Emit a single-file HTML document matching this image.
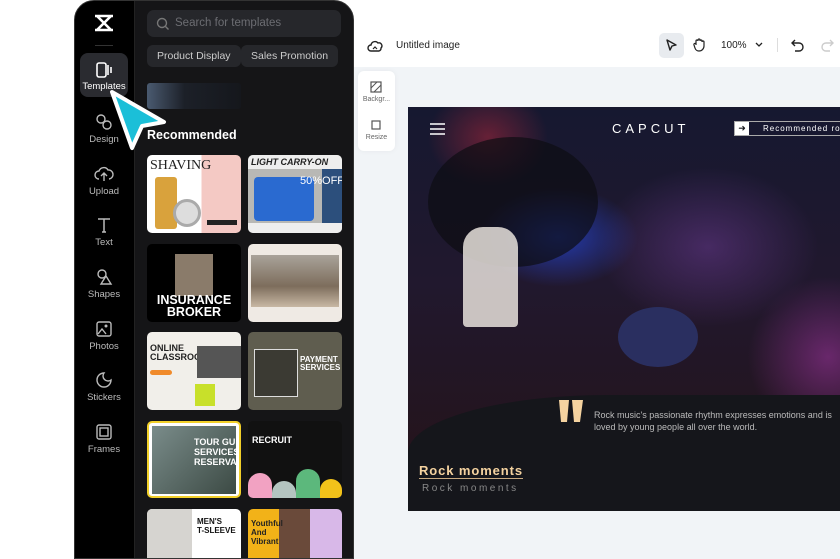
<!DOCTYPE html>
<html><head><meta charset="utf-8"><style>
*{margin:0;padding:0;box-sizing:border-box}
body{width:840px;height:559px;overflow:hidden;background:#fff;font-family:"Liberation Sans",sans-serif;position:relative}
.panel{position:absolute;left:74px;top:0;width:280px;height:559px;background:#151517;border-radius:20px 20px 0 0;overflow:hidden;border:1px solid #333}
.nav{position:absolute;left:0;top:0;width:59px;height:100%;background:#000}
.ni{position:absolute;left:5px;width:48px;text-align:center;color:#bbb;font-size:9.5px}
.ni svg{display:block;margin:0 auto 3px}
.search{position:absolute;left:72px;top:9px;width:194px;height:27px;background:#26272b;border-radius:7px;color:#6c6d72;font-size:11.5px;line-height:27px;padding-left:28px}
.chip{position:absolute;top:44px;height:22px;background:#26272b;border-radius:6px;color:#ccc;font-size:10.5px;line-height:22px;padding:0 10px}
.card{position:absolute;width:94px;border-radius:5px;overflow:hidden}
.a{position:absolute}
</style></head><body>
<div class="panel">
 <div class="nav">
  <svg class="a" style="left:17px;top:12px" width="24" height="20" viewBox="0 0 24 20"><path d="M3 3h18M3 17h18M5 3l14 14M19 3L5 17" stroke="#fff" stroke-width="2.6" fill="none"/></svg>
  <div class="a" style="left:20px;top:44px;width:18px;height:1px;background:#333"></div>
  <div class="ni" style="top:52px;height:44px;background:#2a2b30;border-radius:8px;padding-top:9px;color:#fff"><svg width="18" height="16"><rect x="2" y="1" width="9" height="14" rx="2" stroke="#fff" stroke-width="1.6" fill="none"/><path d="M13 3v10M16 5v6" stroke="#fff" stroke-width="1.6"/></svg>Templates</div>
  <div class="ni" style="top:112px"><svg width="18" height="18"><circle cx="6" cy="6" r="4" stroke="#bbb" stroke-width="1.4" fill="none"/><circle cx="12" cy="12" r="4" stroke="#bbb" stroke-width="1.4" fill="none"/></svg>Design</div>
  <div class="ni" style="top:164px"><svg width="20" height="18"><path d="M5 14a4 4 0 010-8 5 5 0 019-1 4 4 0 011 9M10 9v7M7 11l3-3 3 3" stroke="#bbb" stroke-width="1.4" fill="none"/></svg>Upload</div>
  <div class="ni" style="top:215px"><svg width="18" height="18"><path d="M3 3h12M9 3v13M7 16h4" stroke="#bbb" stroke-width="1.5" fill="none"/></svg>Text</div>
  <div class="ni" style="top:267px"><svg width="18" height="18"><circle cx="7" cy="6" r="4" stroke="#bbb" stroke-width="1.4" fill="none"/><path d="M11 8l5 8H6z" stroke="#bbb" stroke-width="1.4" fill="none"/></svg>Shapes</div>
  <div class="ni" style="top:319px"><svg width="18" height="18"><rect x="2" y="2" width="14" height="14" rx="2" stroke="#bbb" stroke-width="1.4" fill="none"/><circle cx="11" cy="6" r="1.5" fill="#bbb"/><path d="M3 14l4-5 4 5" stroke="#bbb" stroke-width="1.4" fill="none"/></svg>Photos</div>
  <div class="ni" style="top:370px"><svg width="18" height="18"><path d="M9 2a7 7 0 107 7 5 5 0 01-7-7z" stroke="#bbb" stroke-width="1.4" fill="none"/></svg>Stickers</div>
  <div class="ni" style="top:422px"><svg width="18" height="18"><rect x="2" y="2" width="14" height="14" rx="2" stroke="#bbb" stroke-width="1.4" fill="none"/><rect x="5" y="5" width="8" height="8" stroke="#bbb" stroke-width="1.4" fill="none"/></svg>Frames</div>
 </div>
 <div class="a" style="left:59px;top:0;width:1px;height:100%;background:#222"></div>
 <div class="search"><svg class="a" style="left:9px;top:7px" width="13" height="13"><circle cx="6" cy="6" r="4.5" stroke="#777" stroke-width="1.4" fill="none"/><path d="M9.5 9.5l3 3" stroke="#777" stroke-width="1.4"/></svg>Search for templates</div>
 <div class="chip" style="left:72px">Product Display</div>
 <div class="chip" style="left:166px">Sales Promotion</div>
 <div class="a" style="left:72px;top:82px;width:94px;height:26px;background:linear-gradient(90deg,#4a5a70,#1c2028 40%,#15171c);border-radius:3px"></div>
 <div class="a" style="left:72px;top:127px;color:#fff;font-weight:bold;font-size:12.5px">Recommended</div>
 <div class="card" style="left:72px;top:154px;height:78px;background:linear-gradient(90deg,#fff 58%,#f4c9c4 58%)"><div class="a" style="left:3px;top:3px;font:14px 'Liberation Serif',serif;color:#222">SHAVING</div><div class="a" style="left:8px;top:22px;width:22px;height:52px;background:#d9a23c;border-radius:3px"></div><div class="a" style="left:26px;top:44px;width:28px;height:28px;border-radius:50%;background:#ddd;border:3px solid #aaa"></div><div class="a" style="left:60px;top:65px;width:30px;height:5px;background:#222"></div></div>
 <div class="card" style="left:173px;top:154px;height:78px;background:#b8b8b5"><div class="a" style="left:0;top:0;width:94px;height:14px;background:#eee;font:bold italic 9px 'Liberation Sans';color:#222;padding:2px 3px">LIGHT CARRY-ON</div><div class="a" style="left:6px;top:22px;width:60px;height:44px;background:#2a6ad0;border-radius:4px"></div><div class="a" style="left:74px;top:14px;width:20px;height:54px;background:#2c4f7c"></div><div class="a" style="left:52px;top:20px;color:#fff;font-size:11px">50%OFF</div><div class="a" style="left:0;top:68px;width:94px;height:10px;background:#eee"></div></div>
 <div class="card" style="left:72px;top:243px;height:78px;background:#000"><div class="a" style="left:28px;top:10px;width:38px;height:42px;background:#8a7b6a"></div><div class="a" style="left:0;top:50px;width:94px;text-align:center;color:#fff;font-weight:bold;font-size:12.5px;line-height:12px">INSURANCE<br>BROKER</div></div>
 <div class="card" style="left:173px;top:243px;height:78px;background:#efeae4"><div class="a" style="left:3px;top:11px;width:88px;height:52px;background:linear-gradient(#a9a39a,#7d6d5c 60%,#c8b8a4)"></div></div>
 <div class="card" style="left:72px;top:331px;height:78px;background:#f1efea"><div class="a" style="left:3px;top:12px;font:bold 9px 'Liberation Sans';color:#222;line-height:9px">ONLINE<br>CLASSROOM</div><div class="a" style="left:50px;top:14px;width:44px;height:32px;background:#555"></div><div class="a" style="left:48px;top:52px;width:20px;height:22px;background:#c8e02a"></div><div class="a" style="left:3px;top:38px;width:22px;height:5px;background:#f08a2a;border-radius:3px"></div></div>
 <div class="card" style="left:173px;top:331px;height:78px;background:#5f5d4f"><div class="a" style="left:6px;top:17px;width:44px;height:48px;background:#3b3a33;border:1px solid #ddd"></div><div class="a" style="left:52px;top:24px;color:#fff;font:bold 8px 'Liberation Sans';line-height:8px">PAYMENT<br>SERVICES</div></div>
 <div class="card" style="left:72px;top:420px;height:77px;background:#fff;border:2px solid #f2d02a"><div class="a" style="left:3px;top:3px;width:84px;height:68px;background:linear-gradient(135deg,#7a8c8a,#3c4a44)"></div><div class="a" style="left:45px;top:14px;color:#fff;font:bold 9px 'Liberation Sans';line-height:10px">TOUR GUIDE<br>SERVICES<br>RESERVATION</div></div>
 <div class="card" style="left:173px;top:420px;height:77px;background:#111"><div class="a" style="left:4px;top:14px;color:#fff;font:bold 9px 'Liberation Sans'">RECRUIT</div><div class="a" style="left:0;top:52px;width:24px;height:25px;background:#f2a2c2;border-radius:12px 12px 0 0"></div><div class="a" style="left:24px;top:60px;width:24px;height:17px;background:#b4c4c0;border-radius:12px 12px 0 0"></div><div class="a" style="left:48px;top:48px;width:24px;height:29px;background:#5cb87c;border-radius:12px 12px 0 0"></div><div class="a" style="left:72px;top:58px;width:22px;height:19px;background:#f2c21a;border-radius:12px 12px 0 0"></div></div>
 <div class="card" style="left:72px;top:508px;height:60px;background:#fff"><div class="a" style="left:0;top:0;width:45px;height:60px;background:#d6d4d0"></div><div class="a" style="left:50px;top:8px;font:bold 8px 'Liberation Sans';color:#111;line-height:9px">MEN'S<br>T-SLEEVE</div></div>
 <div class="card" style="left:173px;top:508px;height:60px;background:linear-gradient(90deg,#f2b218 33%,#6a4a3a 33% 66%,#d8b8e8 66%)"><div class="a" style="left:3px;top:10px;font:bold 8px 'Liberation Sans';color:#222;line-height:9px">Youthful<br>And<br>Vibrant</div></div>
</div>
<svg class="a" style="left:104px;top:84px" width="70" height="70" viewBox="0 0 70 70"><path d="M8 8L60 38 38 42 28 64z" fill="#1bbfd8" stroke="#fff" stroke-width="4" stroke-linejoin="round"/></svg>

<!-- top bar -->
<svg class="a" style="left:367px;top:39px" width="16" height="14"><path d="M4 12a3 3 0 010-6 4 4 0 017-2 3 3 0 013 5 3 3 0 01-2 3z" stroke="#222" stroke-width="1.4" fill="none"/><path d="M6 10l2-2 2 2" stroke="#222" stroke-width="1.2" fill="none"/></svg>
<div class="a" style="left:396px;top:40px;font-size:10px;color:#222">Untitled image</div>
<div class="a" style="left:659px;top:33px;width:25px;height:25px;background:#e8ebef;border-radius:5px"></div>
<svg class="a" style="left:664px;top:38px" width="14" height="14"><path d="M3 2l9 5-4 1-2 4z" stroke="#222" stroke-width="1.4" fill="none" stroke-linejoin="round"/></svg>
<svg class="a" style="left:692px;top:37px" width="14" height="15"><path d="M4 8V4a1 1 0 012 0V3a1 1 0 012 0v1a1 1 0 012 0v1a1 1 0 012 0v4a5 5 0 01-5 5 4 4 0 01-4-3L2 8a1 1 0 012-1z" stroke="#222" stroke-width="1.2" fill="none"/></svg>
<div class="a" style="left:721px;top:40px;font-size:10px;color:#222">100%</div>
<svg class="a" style="left:754px;top:41px" width="10" height="8"><path d="M2 2l3 3 3-3" stroke="#222" stroke-width="1.3" fill="none"/></svg>
<div class="a" style="left:777px;top:38px;width:1px;height:14px;background:#ddd"></div>
<svg class="a" style="left:791px;top:38px" width="14" height="14"><path d="M4 2L1 5l3 3M1 5h7a4 4 0 010 8H4" stroke="#222" stroke-width="1.4" fill="none"/></svg>
<svg class="a" style="left:820px;top:38px" width="14" height="14"><path d="M10 2l3 3-3 3M13 5H6a4 4 0 000 8h4" stroke="#ccc" stroke-width="1.4" fill="none"/></svg>

<div class="a" style="left:354px;top:67px;width:486px;height:492px;background:#f1f4f7"></div>
<div class="a" style="left:358px;top:71px;width:37px;height:80px;background:#fff;border-radius:6px;box-shadow:0 0 6px rgba(0,0,0,.05)"></div>
<svg class="a" style="left:370px;top:81px" width="12" height="12"><rect x="1" y="1" width="10" height="10" stroke="#555" stroke-width="1.2" fill="none"/><path d="M1 7l6-6M4 11l7-7" stroke="#555" stroke-width="1"/></svg>
<div class="a" style="left:360px;top:96px;width:33px;text-align:center;font-size:7px;color:#666">Backgr...</div>
<svg class="a" style="left:370px;top:119px" width="12" height="12"><rect x="2" y="2" width="8" height="8" stroke="#555" stroke-width="1.2" fill="none"/></svg>
<div class="a" style="left:360px;top:134px;width:33px;text-align:center;font-size:7px;color:#666">Resize</div>

<!-- design -->
<div class="a" style="left:408px;top:107px;width:432px;height:404px;background:#15161b;overflow:hidden">
 <div class="a" style="left:0;top:0;width:432px;height:350px;background:radial-gradient(ellipse 80px 50px at 150px 130px,rgba(40,80,255,.6),transparent),radial-gradient(ellipse 110px 80px at 300px 140px,rgba(110,60,150,.5),transparent),radial-gradient(ellipse 80px 80px at 420px 250px,rgba(190,60,190,.45),transparent),radial-gradient(ellipse 60px 50px at 80px 30px,rgba(180,40,60,.5),transparent),linear-gradient(180deg,#161830,#21182e 50%,#24141c)"></div>
 <div class="a" style="left:20px;top:30px;width:170px;height:130px;background:#0d0d12;border-radius:50%;opacity:.7"></div>
 <div class="a" style="left:55px;top:120px;width:55px;height:100px;background:#e8e2dc;border-radius:20px 20px 4px 4px;opacity:.85"></div>
 <div class="a" style="left:210px;top:200px;width:80px;height:60px;background:#2a2f60;border-radius:50%"></div>
 <div class="a" style="left:0;top:288px;width:432px;height:116px;background:#15161b;border-top-left-radius:200px 58px"></div>
 <svg class="a" style="left:22px;top:16px" width="16" height="12"><path d="M0 1h15M0 6h15M0 11h15" stroke="#fff" stroke-width="1.6"/></svg>
 <div class="a" style="left:204px;top:14px;color:#fff;font-size:13px;letter-spacing:4px">CAPCUT</div>
 <div class="a" style="left:326px;top:14px;width:130px;height:15px;border:1px solid #aaa"><div class="a" style="left:0;top:0;width:14px;height:13px;background:#fff;color:#15161b;font-size:9px;text-align:center;line-height:13px">➜</div><div class="a" style="left:28px;top:2px;color:#fff;font-size:8px;letter-spacing:1px;white-space:nowrap">Recommended ro</div></div>
 <svg class="a" style="left:150px;top:292px" width="26" height="24"><path d="M1 1h10l-2 22H3zM14 1h11l-3 22h-6z" fill="#f5d3a0"/></svg>
 <div class="a" style="left:186px;top:302px;color:#bbb;font-size:9px;line-height:12px;width:244px">Rock music's passionate rhythm expresses emotions and is loved by young people all over the world.</div>
 <div class="a" style="left:11px;top:356px;color:#f5d3a0;font-size:13px;font-weight:bold;letter-spacing:.9px;border-bottom:1.5px solid #c8aa80;line-height:15px">Rock moments</div>
 <div class="a" style="left:14px;top:376px;color:#888;font-size:10px;letter-spacing:2.5px">Rock moments</div>
</div>
</body></html>
